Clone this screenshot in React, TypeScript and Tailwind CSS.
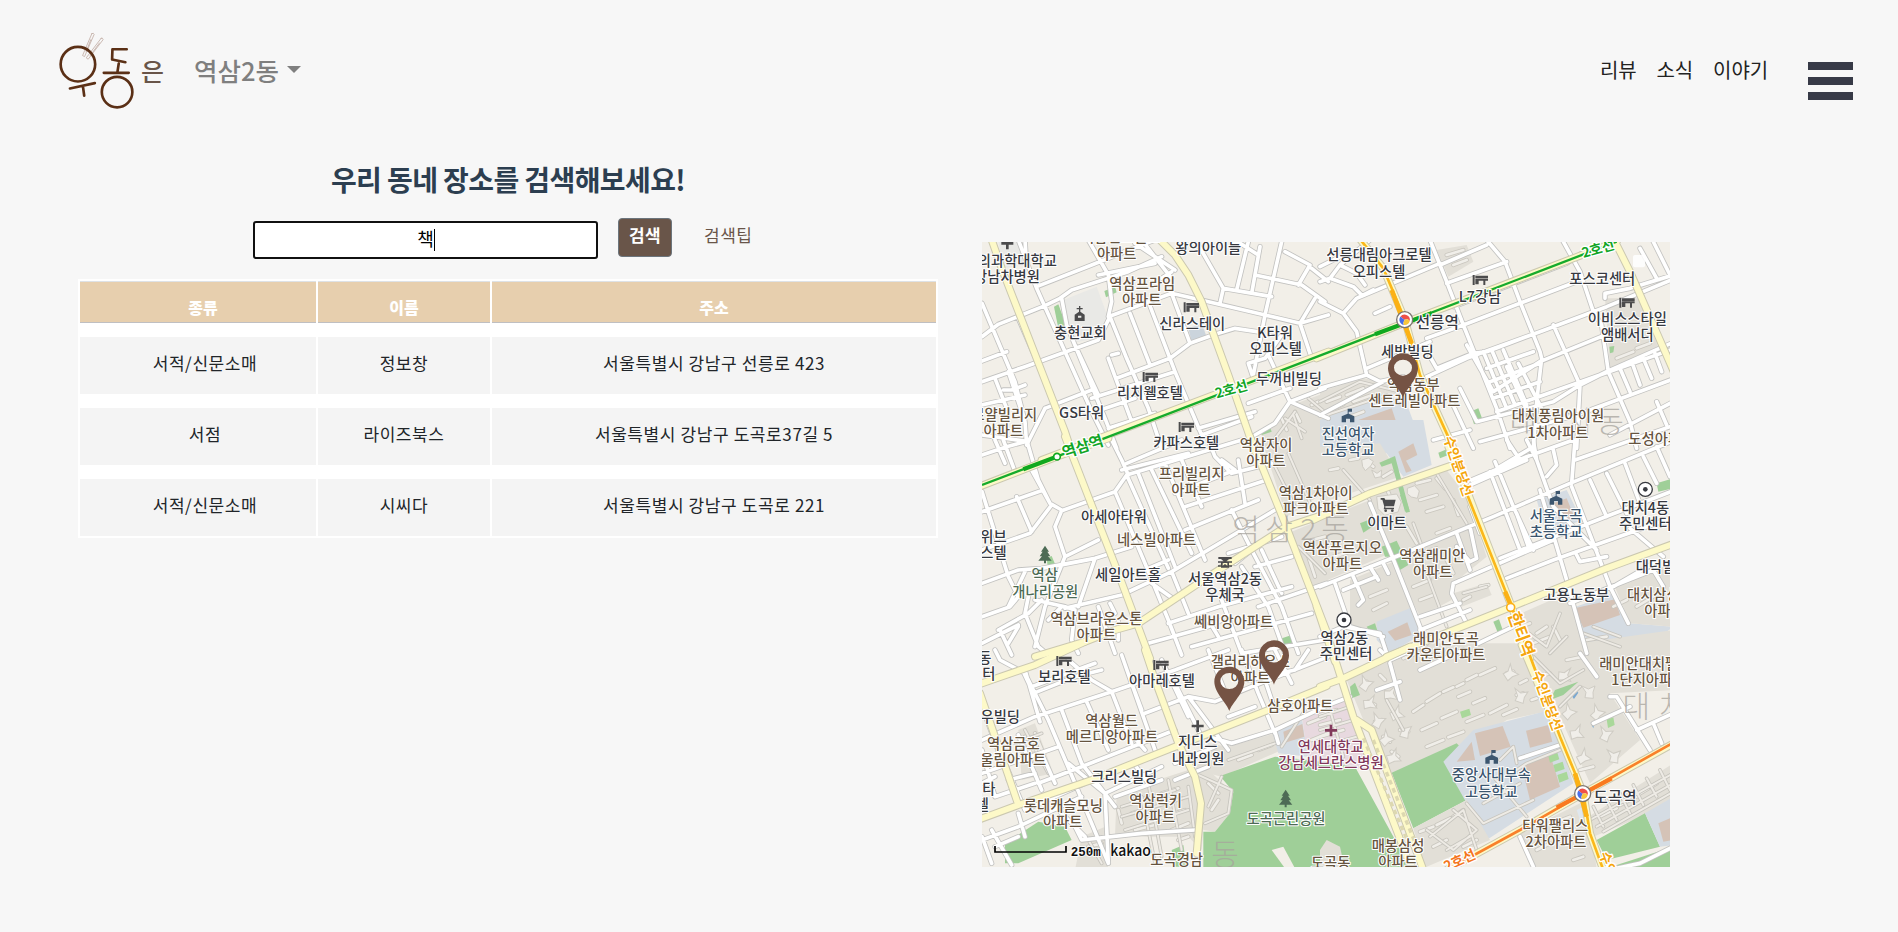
import React from "react";

type Tile = "a" | "b" | "c" | "d" | "e" | "f";

const origin: Record<Tile, [number, number]> = {
  a: [0, 0],
  b: [1035, 0],
  c: [0, 615],
  d: [1035, 615],
  e: [0, 1245],
  f: [1035, 1245],
};
const tiles: Tile[] = ["a", "b", "c", "d", "e", "f"];
const shift = (t: Tile) => `translate(${origin[t][0]} ${origin[t][1]})`;

const streets: Record<Tile, string> = {
  a: `M21 205L120 440 150 560 155 630M130 15L185 160 205 205 355 540 400 630M21 305L70 268 210 212 255 190 290 165 460 110 560 65
M150 15L155 95M185 155L350 90 500 30 540 15M21 378L95 350M21 440L150 395 370 315 405 245M260 190L275 270 390 550 425 640M340 15L400 120 410 200 400 245
M370 120L540 85M400 245L590 175 700 200 870 240 975 265 1060 240M405 245L455 370 520 520 560 640M465 235L525 390M520 200L600 410 680 600M590 175L645 325
M425 430L585 370 645 325 720 298 780 280 860 292M350 490L600 410M210 520L350 465M360 530L480 490M155 630L210 520M300 330L370 480M60 430L95 520M100 410L140 530
M85 465L110 465 150 450M430 355L410 360M400 580L540 535M480 25L600 105M500 15L590 130M590 110L560 130M670 30L745 160 735 205M745 160L890 185M820 20L785 165M855 35L830 175M920 20L870 240 835 420
M780 15L850 60M840 120L980 150 1050 200M1005 90L970 150M1005 90L930 50M1020 190L975 265 1010 370M1060 140L1010 100M920 300L870 370 820 385 835 430M880 360L945 500M820 505L945 460M945 500L1060 550
M945 500L900 565 840 600M670 580L840 530M945 500L1050 460M680 600L830 545M21 510L150 480M130 250L230 480M400 370L470 560M21 600L160 620`,
  b: `M330 15L360 90 380 140 430 270 530 520 570 640M500 15L555 80 600 200 660 350 665 370 650 500 640 640M730 20L780 110 820 230 845 270 865 410 930 560 950 640
M0 200L70 235 110 290 140 420M70 235L110 190 360 85M110 190L160 165M30 130L60 90 150 15M0 140L30 130 100 155 125 180M60 90L110 115 135 150M360 90L500 30M380 145L560 80M400 215L740 85 800 45
M165 235L210 215M430 270L600 205 770 140M310 430L440 370 660 290 860 215 1065 130M140 420L180 440 250 425M140 400L330 320M350 400L460 355 500 350 660 290M330 365L350 400M490 350L560 520M515 345L585 510M550 345L620 510
M440 330L520 470 660 380 880 290M500 400L640 350M510 440L660 385M520 490L660 440M530 530L1065 340M700 270L780 450M860 410L1065 320M780 450L860 410M780 450L770 640M420 460L470 560 700 500 780 450M900 400L930 470M935 380L960 450M970 370L995 430M1005 355L1025 410
M480 620L770 540 1065 430M390 490L460 640M430 270L320 310M960 40L1010 130M1000 20L1050 120M1060 120L930 160 855 175 855 190M870 600L1060 500M1010 500L1040 570M0 460L140 420M0 540L190 440M595 385L665 520M560 395L620 525M0 95L90 50`,
  c: `M21 155L60 280 100 410 130 470 105 500 21 530M60 0L90 70M85 0L120 95M21 45L95 20 150 5M21 215L205 150M125 170L170 275M170 90L225 190 260 210M230 195L165 280 21 330M260 212L240 260 270 350 210 500 180 620
M155 0L190 120 225 190M260 212L420 155 455 105 800 0M420 155L510 370M455 105L580 385M490 100L600 380M530 90L650 340M570 70L690 360M455 70L620 0M460 105L440 60 410 0M620 60L680 200M440 90L640 40M600 160L780 90M630 200L875 120
M270 350L370 300M260 375L360 355 470 320M360 355L310 500M270 505L440 465 590 395 800 270 900 210M770 210L830 330M630 270L850 180M21 430L130 390 200 385 360 355M150 395L100 500M180 480L270 500 300 510 290 600 310 640M160 470L150 520 190 620 220 645
M21 610L100 570 130 555M75 570L110 645M100 610L130 560M200 480L160 520 70 570M220 540L260 500M530 430L600 480M510 370L580 540 620 645M510 390L580 360M590 395L640 520M580 550L730 500 950 440M520 610L700 560 740 540M740 480L800 640M700 540L730 590
M800 380L880 500 930 640M830 330L920 500 970 640M860 330L920 460M850 500L1055 430M650 620L1010 520M800 640L1050 600M840 380L950 350M780 370L830 330M700 0L720 50 770 100 890 70M740 60L780 90M790 60L810 190M405 490L420 520M430 545L430 600M370 500L420 640M920 290L760 340`,
  d: `M0 440L240 345 520 230 750 130 1065 0M150 190L215 345 300 560 310 640M455 120L620 50 760 0M640 0L650 60 700 200 830 330M525 65L580 200 640 330M510 95L600 330M450 135L620 60M540 355L870 225 1065 150M560 415L700 360 1065 230
M400 430L700 300M660 150L740 420 800 640M755 140L870 440 925 550M765 0L755 130M700 30L710 75 680 110M765 60L1050 -40M810 120L860 230M860 100L920 220M915 70L960 190M970 50L1010 130M1010 20L1050 110M400 430L395 460 440 550M410 280L450 390M450 260L470 355 450 365 410 320
M300 530L420 490M300 570L450 510M45 430L90 560 190 590M100 410L130 480 115 495M150 380L175 420M190 370L205 400M70 450L170 410M770 345L780 365 860 350M930 265L1030 350M1000 370L880 440M750 490L900 430 1000 390 1030 440M340 0L450 -30M0 590L70 560 180 580 200 640M450 200L480 280
M590 220L625 320M640 20L540 80M475 610L600 550M620 0L650 60M560 0L600 60`,
  e: `M60 0L75 30 150 70 220 210 300 400 400 640M145 65L175 130 300 80 380 60M170 110L360 40M21 270L180 200 410 125 600 60 760 0M280 30L350 90 410 125 470 280M21 370L250 290M150 60L195 215M260 180L320 340 420 470M335 155L400 300
M410 125L470 280M440 15L540 300M470 100L500 180M190 400L320 350 600 240M60 440L180 400M280 340L390 430 400 640M21 170L80 330M60 270L150 480M100 390L180 370M130 255L200 420M240 470L330 560M390 430L560 350M480 345L520 400M510 190L640 140 720 155 830 110 1060 20
M640 140L760 300M560 30L640 200M600 100L680 260M700 0L760 150M800 0L850 130 900 250M700 260L770 280 900 240 1050 170M820 90L960 60 1000 0M600 390L700 350M420 440L560 390M21 570L130 530 320 440M50 540L110 645M130 490L150 560M60 590L130 560M300 530L320 570 500 550 660 540
M150 480L330 400M21 400L60 380M21 300L60 440M900 0L950 100M860 60L900 180M600 340L720 290M760 200L840 170M200 310L240 400M450 230L510 300M21 560L50 640M900 245L910 280`,
  f: `M180 0L210 30 320 -20M210 40L240 150M170 120L240 95M300 60L430 0M0 175L90 140M780 10L830 80M600 325L720 285M820 220L930 170M870 140L890 140 990 300M950 240L1060 190M1000 220L1025 280M600 560L640 650M850 640L890 655 960 640 1060 590`,
};

const lanes: Record<Tile, string> = {
  a: `M900 610L960 530M930 550L990 590M955 540L980 610M1000 490L1060 540`,
  b: `M0 500L120 440 240 470M20 540L200 480`,
  c: `M890 60L960 200M940 40L1010 200M970 320L1050 400`,
  d: `M70 90L150 180M350 100L440 250M280 250L310 330M320 400L380 560M430 460L500 440M790 580L900 620M820 560L900 590M600 560L680 620 720 520M690 640L740 590`,
  e: `M660 370L770 420 760 490 690 520M440 470L600 420M440 500L640 440M450 540L640 480M520 400L560 620M580 390L620 600M640 410L660 560M500 440L540 640M340 570L380 640M150 240L220 370M120 280L200 250M700 470L740 380M760 330L900 280M920 290L990 180`,
  f: `M440 460L490 520 640 450M490 460L600 400M520 380L620 500M590 360L620 340 720 300M540 330L580 290 590 340M320 540L400 600 470 540 400 480M330 560L430 480 470 600M380 600L450 560M810 510L1060 370M830 530L1060 400M850 545L1060 425M820 470L850 530M860 450L890 510M900 430L930 490M940 405L970 465M980 385L1010 440M1020 360L1050 420
M720 170L780 110M640 20L720 100 790 60M200 150L250 240M0 200L90 170M0 240L100 210M0 290L110 260M30 180L70 320`,
};

const avenues: Record<Tile, string> = {
  a: `M45 0L80 100 270 590 290 650M540 0L600 60 640 120 680 200 760 420 840 650M200 675L1060 350`,
  b: `M-10 370L250 265 890 20M110 0L190 100 255 255 300 420 405 650M875 0L930 110 1000 270 1070 430`,
  c: `M0 145L245 50 400 -5M270 -10L340 170 430 400 525 655M825 -10L930 250 1055 575M180 650L330 605 420 570 490 550 700 410 930 262 1065 218`,
  d: `M-20 240L150 160 390 78M385 20L440 150 575 500 630 655M200 650L575 500 860 385 1070 308M-10 500L45 665`,
  e: `M0 107L180 45 330 -25M510 0L540 90 610 280 660 380 678 460 665 610M0 513L130 465 350 390 600 290 880 180 1055 108M15 130L60 260 130 465`,
  f: `M0 110L70 85 270 -10M30 -20L100 200 115 240 260 620 280 660M110 210L155 240 310 660M605 -15L720 260 790 430 810 550 850 660M380 660L600 540 790 430 1070 275`,
};

interface Area { t: Tile; c: string; d: string }
const estate = "#e2dfd7";
const campus = "#d5dce3";
const court = "#d5c3b7";
const park = "#9fcf98";
const areas: Area[] = [
  { t: "a", c: "#e9e9e6", d: "M265 195L365 155 400 250 365 310 290 325Z" },
  { t: "a", c: "#e9e9e6", d: "M70 20L140 20 145 90 85 100Z" },
  { t: "a", c: park, d: "M388 168L420 155 425 172 393 187Z" },
  { t: "a", c: park, d: "M237 215L250 208 275 275 250 280Z" },
  { t: "a", c: "#cbd4dc", d: "M640 280L680 265 695 305 650 320Z" },
  { t: "a", c: estate, d: "M860 590L950 510 1060 470 1060 640 860 640Z" },
  { t: "a", c: park, d: "M855 585L885 575 890 590 860 600Z" },
  { t: "b", c: estate, d: "M0 470L130 430 190 440 240 470 200 490 0 560Z" },
  { t: "b", c: campus, d: "M0 555L200 475 265 520 310 640 0 640Z" },
  { t: "b", c: court, d: "M100 560L215 520 235 580 120 630Z" },
  { t: "b", c: park, d: "M450 530L475 520 488 555 462 568Z" },
  { t: "b", c: estate, d: "M350 45L440 30 460 80 385 125Z" },
  { t: "b", c: estate, d: "M855 190L960 190 1020 350 870 400Z" },
  { t: "b", c: park, d: "M868 335L883 333 880 352 870 355Z" },
  { t: "c", c: estate, d: "M870 30L1060 0 1060 150 935 230Z" },
  { t: "c", c: estate, d: "M950 275L1060 230 1060 430 1020 450Z" },
  { t: "c", c: park, d: "M215 355L230 348 240 372 218 378Z" },
  { t: "c", c: park, d: "M905 600L950 585 957 610 915 620Z" },
  { t: "d", c: campus, d: "M0 0L0 -60 310 -60 335 75 250 110 200 40 0 60Z" },
  { t: "d", c: estate, d: "M0 20L180 10 240 110 0 190Z" },
  { t: "d", c: estate, d: "M140 165L380 90 440 170 500 350 400 430 395 480 300 530 210 350Z" },
  { t: "d", c: estate, d: "M0 240L150 180 210 340 0 430Z" },
  { t: "d", c: court, d: "M235 35L280 10 292 45 258 62 275 92 258 98Z" },
  { t: "d", c: park, d: "M178 68L225 48 268 210 255 215 215 70 185 80Z" },
  { t: "d", c: park, d: "M355 38L380 28 385 45 360 55Z" },
  { t: "d", c: park, d: "M240 165L252 162 270 215 258 218Z" },
  { t: "d", c: park, d: "M120 250L145 240 155 262 130 278Z" },
  { t: "d", c: park, d: "M185 320L230 302 265 375 240 390 222 350 195 350Z" },
  { t: "d", c: estate, d: "M90 420L220 365 300 560 200 590 90 560Z" },
  { t: "d", c: estate, d: "M400 460L500 430 515 465 425 500Z" },
  { t: "d", c: campus, d: "M170 545L280 500 310 580 210 640 170 600Z" },
  { t: "d", c: court, d: "M203 575L262 547 275 585 225 602Z" },
  { t: "d", c: campus, d: "M650 180L740 150 785 240 680 285Z" },
  { t: "d", c: court, d: "M700 190L740 175 765 235 720 250Z" },
  { t: "d", c: park, d: "M1010 130L1060 115 1060 145 1015 155Z" },
  { t: "d", c: estate, d: "M580 530L740 460 810 640 620 660Z" },
  { t: "d", c: campus, d: "M755 505L880 460 930 550 1060 560 980 620 820 645Z" },
  { t: "d", c: court, d: "M763 505L885 478 900 525 790 563Z" },
  { t: "d", c: estate, d: "M880 430L1060 370 1060 560 930 550Z" },
  { t: "d", c: park, d: "M520 545L537 538 550 575 535 582Z" },
  { t: "d", c: park, d: "M140 560L165 550 172 572 150 575Z" },
  { t: "f", c: estate, d: "M80 90L330 -20 610 -20 700 180 560 210 410 310 215 370 130 210Z" },
  { t: "f", c: estate, d: "M630 0L1060 -60 1060 120 870 130 960 270 810 400Z" },
  { t: "e", c: estate, d: "M700 280L760 290 900 250 920 300 740 380 660 360Z" },
  { t: "e", c: campus, d: "M890 240L980 200 1000 320 910 310Z" },
  { t: "e", c: court, d: "M925 245L982 222 988 260 930 278Z" },
  { t: "e", c: "#e8d9df", d: "M980 190L1130 140 1190 360 1000 340Z" },
  { t: "e", c: estate, d: "M425 430L640 360 690 460 680 600 640 560 420 560Z" },
  { t: "e", c: estate, d: "M660 360L690 350 775 430 765 490 720 545 685 540Z" },
  { t: "e", c: park, d: "M735 378L900 320 1000 330 1140 350 1310 660 685 660 685 545 720 545 765 490 775 425Z" },
  { t: "e", c: park, d: "M90 580L190 515 270 530 290 570 130 640 90 640Z" },
  { t: "e", c: estate, d: "M320 560L390 530 400 660 300 660Z" },
  { t: "e", c: estate, d: "M130 240L180 220 235 370 140 390Z" },
  { t: "e", c: park, d: "M590 600L625 585 635 650 600 650Z" },
  { t: "e", c: "#f2efe8", d: "M890 600L925 590 960 655 930 655Z" },
  { t: "f", c: park, d: "M215 368L410 280 430 300 440 450 280 535Z" },
  { t: "f", c: campus, d: "M370 335L460 240 690 180 760 400 500 570 440 460Z" },
  { t: "f", c: court, d: "M465 250L548 228 572 290 480 318Z" },
  { t: "f", c: court, d: "M618 242L685 225 697 275 630 293Z" },
  { t: "f", c: court, d: "M605 350L690 312 720 410 630 450Z" },
  { t: "f", c: court, d: "M410 335L455 275 465 330Z" },
  { t: "f", c: estate, d: "M280 535L440 450 510 570 320 650 310 640Z" },
  { t: "f", c: "#f2efe8", d: "M400 655L600 550 720 480 800 550 840 655Z" },
  { t: "f", c: estate, d: "M600 550L800 450 830 655 650 655Z" },
  { t: "f", c: estate, d: "M805 500L1060 340 1060 460 820 560Z" },
  { t: "f", c: park, d: "M830 570L975 490 1020 590 860 630Z" },
  { t: "f", c: campus, d: "M975 490L1060 440 1060 585 1020 590Z" },
  { t: "f", c: court, d: "M1015 520L1060 500 1060 570 1030 575Z" },
  { t: "f", c: park, d: "M890 645L1060 590 1060 660 900 660Z" },
  { t: "f", c: park, d: "M690 150L705 120 775 95 730 135Z" },
  { t: "f", c: park, d: "M90 110L105 98 120 135 95 145Z" },
  { t: "f", c: "#a9d89a", d: "M420 185L448 176 453 195 426 205ZM685 318L712 308 718 328 690 338ZM700 345L728 335 734 357 706 367ZM712 375L740 365 746 387 718 398ZM860 208L880 202 884 225 864 234Z" },
  { t: "f", c: "#dfe7ee", d: "M770 480L790 470 800 500 780 510Z" },
  { t: "f", c: "#7ba8d0", d: "M757 140L770 122 775 128 762 147ZM812 218L823 217 820 235Z" },
  { t: "f", c: estate, d: "M0 600L20 570 60 590 75 660 0 660Z" },
];

const blocks: Record<Tile, string> = {
  a: `M920 550L935 585M960 530L975 560M1010 510L1030 500`,
  b: `M20 500L60 485M80 480L130 460M30 525L70 508M100 500L150 482M90 545L130 530M380 60L430 45M400 90L440 75M890 370L940 350M950 340L990 325`,
  c: `M1000 350L1020 410M1010 300L1050 290`,
  d: `M80 30L110 22M90 60L115 55M30 90L55 85M140 65L160 80M190 110L215 95M200 145L215 180M290 130L330 120M350 115L375 145M300 180L350 165M320 215L370 200M400 180L415 225M350 280L390 265M260 260L290 310M300 340L350 325M380 360L400 400M280 440L330 420M350 410L380 395M300 480L340 465M150 470L200 450M160 510L200 490M430 480L450 470M480 440L505 435M600 560L630 550M650 580L680 560M640 610L690 590M700 560L720 600M40 350L90 335M880 500L920 480M950 500L1000 470M800 600L860 590`,
  e: `M430 480L440 520M470 460L520 440M470 490L520 475M560 430L610 415M570 460L620 445M570 500L630 480M480 540L540 525M590 540L640 520M610 570L640 560M700 400L730 430M710 480L730 450M150 260L170 320M180 250L205 310M790 330L830 315M850 300L890 285M340 590L380 580M1000 220L1050 200M1010 270L1060 250`,
  f: `M280 185L310 165M320 155L360 130M370 125L400 112M410 110L430 100M440 90L470 75M480 75L525 55M305 240L350 220M365 205L410 185M415 140L450 125M460 160L495 145M320 290L370 270M385 262L430 245M440 215L490 195M510 190L560 165M550 195L590 178M140 95L130 110M180 75L195 90M145 155L165 165M165 215L185 210M240 240L265 245M220 185L240 195M190 260L210 275M215 305L235 320M330 20L370 0M250 25L290 10M560 70L580 65M590 135L610 130M635 150L650 145M600 100L620 90M0 195L50 180M0 225L60 210M0 260L70 240M300 545L340 530M350 525L390 505M340 590L380 570M400 500L430 480M430 590L470 570M650 600L690 580M700 520L750 500M760 630L790 620M840 500L890 475M900 465L950 440M960 430L1010 400M650 80L690 70M740 30L790 20M780 360L820 350`,
};

const towers: [number, number][] = [
  [805, 125], [830, 188], [770, 248], [855, 252], [790, 320], [880, 318], [745, 185], [150, 158], [172, 212], [230, 190], [252, 243], [198, 265],
  [212, 130], [135, 100], [220, 320], [600, 137], [570, 68], [735, 75],
];

const BROWN = "#66543f";
const DARK = "#37393f";
const NAVY = "#3c566f";
const WINE = "#823a5b";
const FOREST = "#4d6b55";

type Label = [Tile, number, number, string, string?];
const labels: Label[] = [
  ["a", 127, 92, "의과학대학교"], ["a", 96, 141, "강남차병원"], ["a", 437, 22, "역삼센트럴즈", BROWN], ["a", 425, 72, "아파트", BROWN],
  ["a", 700, 54, "왕의아이들"], ["a", 502, 163, "역삼프라임", BROWN], ["a", 500, 210, "아파트", BROWN], ["a", 316, 309, "충현교회"],
  ["a", 652, 282, "신라스테이"], ["a", 900, 309, "K타워"], ["a", 902, 357, "오피스텔"], ["a", 942, 448, "두꺼비빌딩"], ["a", 525, 490, "리치웰호텔"],
  ["a", 320, 550, "GS타워"], ["a", 88, 555, "로얄빌리지", BROWN], ["a", 85, 603, "아파트", BROWN],
  ["b", 177, 76, "선릉대림아크로텔"], ["b", 177, 125, "오피스텔"], ["b", 480, 200, "L7강남"], ["b", 847, 146, "포스코센터"], ["b", 922, 267, "이비스스타일"],
  ["b", 922, 316, "앰배서더"], ["b", 262, 366, "세방빌딩"], ["b", 280, 466, "역삼동부", BROWN], ["b", 283, 514, "센트레빌아파트", BROWN],
  ["b", 84, 612, "진선여자", NAVY], ["b", 84, 660, "고등학교", NAVY], ["b", 714, 559, "대치풍림아이원", BROWN], ["b", 714, 608, "1차아파트", BROWN], ["b", 1024, 627, "도성아파트", BROWN],
  ["c", 634, 23, "카파스호텔"], ["c", 873, 31, "역삼자이", BROWN], ["c", 873, 79, "아파트", BROWN], ["c", 650, 117, "프리빌리지", BROWN], ["c", 648, 165, "아파트", BROWN],
  ["c", 417, 245, "아세아타워"], ["c", 545, 315, "네스빌아파트", BROWN], ["c", 16, 305, "두산위브"], ["c", 16, 353, "오피스텔"], ["c", 209, 421, "역삼", FOREST], ["c", 211, 470, "개나리공원", FOREST],
  ["c", 459, 419, "세일아트홀"], ["c", 750, 432, "서울역삼2동"], ["c", 750, 481, "우체국"], ["c", 364, 551, "역삼브라운스톤", BROWN], ["c", 364, 600, "아파트", BROWN], ["c", 776, 562, "쎄비앙아파트", BROWN],
  ["c", 1022, 175, "역삼1차아이", BROWN], ["c", 1022, 223, "파크아파트", BROWN], ["c", 1102, 339, "역삼푸르지오", BROWN], ["c", 1102, 387, "아파트", BROWN],
  ["d", 201, 263, "이마트"], ["d", 337, 362, "역삼래미안", BROWN], ["d", 338, 410, "아파트", BROWN], ["d", 708, 243, "서울도곡", NAVY], ["d", 708, 292, "초등학교", NAVY], ["d", 976, 219, "대치4동"],
  ["d", 976, 267, "주민센터"], ["d", 1026, 395, "대덕빌딩"], ["d", 769, 480, "고용노동부"], ["d", 1000, 480, "대치삼성", BROWN], ["d", 1032, 527, "아파트", BROWN],
  ["d", 73, 608, "역삼2동"], ["d", 78, 658, "주민센터"], ["d", 378, 613, "래미안도곡", BROWN], ["d", 378, 660, "카운티아파트", BROWN],
  ["e", -22, 38, "역삼1동"], ["e", -18, 88, "주민센터"], ["e", 268, 96, "보리호텔"], ["e", 561, 109, "아마레호텔"], ["e", 826, 52, "갤러리하우스", BROWN], ["e", 826, 100, "아파트", BROWN], ["e", 976, 184, "삼호아파트", BROWN],
  ["e", 56, 217, "대우빌딩"], ["e", 115, 298, "역삼금호", BROWN], ["e", 95, 346, "어울림아파트", BROWN], ["e", 410, 227, "역삼월드", BROWN], ["e", 411, 276, "메르디앙아파트", BROWN], ["e", 668, 292, "지디스"], ["e", 669, 341, "내과의원"],
  ["e", 448, 397, "크리스빌딩"], ["e", 2, 431, "강남타"], ["e", 2, 480, "호텔"], ["e", 265, 483, "롯데캐슬모닝", BROWN], ["e", 263, 531, "아파트", BROWN], ["e", 542, 468, "역삼럭키", BROWN], ["e", 541, 517, "아파트", BROWN],
  ["e", 933, 522, "도곡근린공원", FOREST], ["e", 605, 645, "도곡경남", BROWN], ["e", 1067, 653, "도곡동", BROWN], ["e", 1067, 306, "연세대학교", WINE], ["e", 1068, 355, "강남세브란스병원", WINE],
  ["f", 514, 391, "중앙사대부속", NAVY], ["f", 514, 440, "고등학교", NAVY], ["f", 706, 543, "타워팰리스", BROWN], ["f", 708, 591, "2차아파트", BROWN], ["f", 234, 602, "매봉삼성", BROWN], ["f", 234, 650, "아파트", BROWN],
  ["f", 976, 57, "래미안대치팰리", BROWN], ["f", 985, 104, "1단지아파트", BROWN],
];

type Sign = [Tile, number, number, "hotel" | "church" | "school" | "tree" | "plus" | "cart" | "post" | "office", string?];
const signs: Sign[] = [
  ["a", 97, 25, "plus"], ["a", 314, 236, "church"], ["a", 649, 217, "hotel"], ["a", 526, 426, "hotel"], ["a", 634, 576, "hotel"], ["b", 481, 135, "hotel"], ["b", 921, 203, "hotel"],
  ["b", 84, 543, "school", NAVY], ["c", 210, 343, "tree", FOREST], ["c", 750, 367, "post"], ["d", 205, 192, "cart"], ["d", 708, 175, "school", NAVY], ["d", 976, 148, "office"], ["d", 72, 540, "office"],
  ["e", 267, 33, "hotel"], ["e", 558, 45, "hotel"], ["e", 668, 228, "plus"], ["e", 932, 445, "tree", FOREST], ["f", 33, 241, "plus", WINE], ["f", 515, 322, "school", NAVY],
];

function SignShape({ kind, color }: { kind: Sign[3]; color: string }) {
  switch (kind) {
    case "hotel":
      return <path fill={color} d="M-23-15h6v30h-6zM-15-13h38v8h-38zM-15-4h38v6h-8v13h-6v-13h-14v11h-10z" />;
    case "church":
      return <path fill={color} fillRule="evenodd" d="M-2-23h4v6h7v4H2v7L15 3v19h-30V3L-2-6v-7h-7v-4h7zM-5 6v6H5V6z" />;
    case "school":
      return <path fill={color} d="M-1-22h13v9H2v6L19 1v18H6V8H-6v11h-13V1L-1-7z" />;
    case "tree":
      return <path fill={color} d="M0-26L12-8H7L16 6H9L20 19H3v8h-6v-8h-17L-9 6h-7L-7-8h-5z" />;
    case "plus":
      return <path fill={color} d="M-4-17h8v13h14v8H4v14h-8V4h-14v-8h14z" />;
    case "cart":
      return (
        <g fill={color}>
          <path d="M-23-18h11l3 5h31l-5 20H-9v4h26v5h-31l2-8-6-21h-5z" />
          <circle cx="-8" cy="20" r="4" /><circle cx="12" cy="20" r="4" />
        </g>
      );
    case "post":
      return <path fill={color} d="M-20-16h40v6h-8L4-3h17v4H12v8h9v4H12v3h-24v-3h-9v-4h9v-8h-9v-4H-4L-12-10h-8zM-7 2v8L0 5 7 10V2z" fillRule="evenodd" />;
    default:
      return (
        <g>
          <circle r="21" fill="#fff" stroke={DARK} strokeWidth="4" /><circle r="7" fill={DARK} />
        </g>
      );
  }
}

function Station({ x, y }: { x: number; y: number }) {
  return (
    <g transform={`translate(${x} ${y})`}>
      <circle r="24" fill="#fff" stroke="#7b7570" strokeWidth="4" />
      <path d="M-13-9A16 16 0 0 1 15 5C10-4 5 0 0 0-6-2-8-8-13-9Z" fill="#ef5148" />
      <path d="M-13-9A16 16 0 0 0-2 16C-6 8-1 4 0 0-6-2-8-8-13-9Z" fill="#4a6ee8" />
      <path d="M15 5A16 16 0 0 1-2 16C-6 8-1 4 0 0 5 0 10-4 15 5Z" fill="#f8c63c" />
    </g>
  );
}

function Pin({ x, y }: { x: number; y: number }) {
  return (
    <path
      transform={`translate(${x} ${y})`}
      fill="#755344"
      fillRule="evenodd"
      d="M0 0C-6-22-45-55-45-88A45 45 0 0 1 45-88C45-55 6-22 0 0ZM0-114A27 24 0 1 0 0-66 27 24 0 0 0 0-114Z"
    />
  );
}

function LineLabel({ x, y, angle, color, text, size = 41 }: { x: number; y: number; angle: number; color: string; text: string; size?: number }) {
  return (
    <text
      transform={`translate(${x} ${y}) rotate(${angle})`}
      textAnchor="middle" fontSize={size} fontWeight="700" fill={color}
      stroke="#fff" strokeWidth="8" strokeLinejoin="round" paintOrder="stroke"
    >
      {text}
    </text>
  );
}

function Network({ paths, width, color }: { paths: Record<Tile, string>; width: number; color: string }) {
  return (
    <g fill="none" stroke={color} strokeWidth={width} strokeLinejoin="round" strokeLinecap="round">
      {tiles.map((t) => <path key={t} transform={shift(t)} d={paths[t]} />)}
    </g>
  );
}

function TownMap() {
  return (
    <svg viewBox="21 21 2064 1875" className="block h-[625px] w-[688px] font-['Noto_Sans_CJK_KR',sans-serif]">
      <rect x="21" y="21" width="2064" height="1875" fill="#f2efe8" />
      {areas.map((a, i) => <path key={i} transform={shift(a.t)} d={a.d} fill={a.c} />)}
      <Network paths={blocks} width={13} color="#c9c6be" />
      <Network paths={blocks} width={8} color="#f0eee9" />
      <g transform={shift("f")}>
        {towers.map(([x, y], i) => (
          <path key={i} transform={`translate(${x} ${y}) rotate(${(i * 37) % 90})`} d="M-20-17L0-8 20-17 14 2 15 20-10 18-7 2Z" fill="#f0eee9" stroke="#cfccc4" strokeWidth="3" />
        ))}
      </g>
      <g transform={shift("d")} fill="#f0eee9" stroke="#cfccc4" strokeWidth="3">
        <path d="M125 60l20-6 15 10-8 14-16 14-8-12zM262 145l22-8 14 16-6 22-18-4-12-10zM155 90l16 10 14-10-2 20-18 4zM170 170l60-8 14 24-10 30-40 10-20-20z" />
      </g>
      <Network paths={lanes} width={11} color="#c6c4bd" />
      <Network paths={lanes} width={6} color="#eeebe5" />
      <Network paths={streets} width={16} color="#c2c2c0" />
      <Network paths={streets} width={11} color="#ffffff" />
      <Network paths={avenues} width={24} color="#cbc8b0" />
      <Network paths={avenues} width={18} color="#fdf9c8" />

      <g transform={shift("f")} fill="none" stroke="#ddd8b0" strokeWidth="10" strokeDasharray="14 12">
        <path d="M130 265L270 590M160 270L290 590" />
      </g>

      <g fill="none" strokeLinejoin="round">
        <path d="M21 750L245 665 1060 352 1285 265 1925 20" stroke="#16ab2c" strokeWidth="7" />
        <path d="M145 703L245 665M1200 298L1370 235" stroke="#10a81f" strokeWidth="13" />
        <path d="M1145 0L1225 100 1290 255 1335 420 1440 650 1475 775 1610 1115 1755 1505 1825 1675 1845 1795 1885 1905" stroke="#fbb81a" strokeWidth="8" />
        <path d="M1250 165L1310 325M1590 1070L1608 1112M1800 1615L1835 1745" stroke="#fbb116" strokeWidth="14" />
        <path d="M1415 1905L1635 1785 1825 1675 2100 1520" stroke="#f9812a" strokeWidth="8" />
        <path d="M1745 1718L1910 1630" stroke="#f97a20" strokeWidth="13" />
      </g>
      <circle cx="246" cy="665" r="10" fill="#fff" stroke="#10a81f" strokeWidth="5" />
      <circle cx="1607" cy="1117" r="12" fill="#fff" stroke="#fbb116" strokeWidth="5" />
      <Station x={1289} y={254} />
      <Station x={1823} y={1676} />

      <g fill="#a7a39d" fillOpacity=".75" fontWeight="300" fontSize="90" textAnchor="middle">
        <text x="813" y="914">역</text><text x="912" y="914">삼</text><text x="1000" y="914">2</text><text x="1080" y="914">동</text>
        <text x="1645" y="590">대</text><text x="1810" y="590">치</text><text x="1905" y="590">동</text>
        <text x="1984" y="1447">대</text><text x="2092" y="1447">치</text>
        <text x="750" y="1889">동</text>
      </g>

      <g fontSize="43" fontWeight="500" textAnchor="middle" stroke="#fff" strokeWidth="6" strokeLinejoin="round" paintOrder="stroke">
        {labels.map(([t, x, y, text, color], i) => (
          <text key={i} x={origin[t][0] + x} y={origin[t][1] + y} fill={color ?? DARK}>{text}</text>
        ))}
        <text x="1387" y="280" fontSize="47" fill={DARK}>선릉역</text>
        <text x="1920" y="1703" fontSize="47" fill={DARK}>도곡역</text>
      </g>

      {signs.map(([t, x, y, kind, color], i) => (
        <g key={i} transform={`translate(${origin[t][0] + x} ${origin[t][1] + y})`}>
          <SignShape kind={kind} color={color ?? "#4b4b4c"} />
        </g>
      ))}

      <LineLabel x={773} y={477} angle={-16} color="#12a526" text="2호선" />
      <LineLabel x={1873} y={55} angle={-16} color="#12a526" text="2호선" />
      <LineLabel x={328} y={650} angle={-18} color="#12a526" text="역삼역" size={46} />
      <LineLabel x={1436} y={698} angle={71} color="#f5a60c" text="수인분당선" />
      <LineLabel x={1622} y={1203} angle={70} color="#f5a60c" text="한티역" size={50} />
      <LineLabel x={1703} y={1402} angle={70} color="#f5a60c" text="수인분당선" />
      <LineLabel x={1905} y={1945} angle={70} color="#f5a60c" text="수인분당선" />
      <LineLabel x={1460} y={1889} angle={-24} color="#f4761d" text="2호선" />

      <Pin x={1284} y={488} />
      <Pin x={763} y={1428} />
      <Pin x={897} y={1349} />

      <rect x="1974" y="60" width="36" height="37" rx="6" fill="#fff" fillOpacity=".85" />
      <path d="M60 1833V1851H273V1833" fill="none" stroke="#000" strokeWidth="5" />
      <g stroke="#fff" strokeWidth="5" paintOrder="stroke" fill="#111">
        <text x="287" y="1863" fontSize="36" fontWeight="700" textLength="90" lengthAdjust="spacingAndGlyphs" className="font-['Liberation_Mono',monospace]">250m</text>
        <text x="406" y="1863" fontSize="46" fontWeight="500" textLength="122" lengthAdjust="spacingAndGlyphs">kakao</text>
      </g>
    </svg>
  );
}

function Logo() {
  return (
    <svg viewBox="0 0 230 250" className="h-[83px] w-[77px]" fill="none" stroke="#5b3016" strokeWidth="8" strokeLinecap="round" strokeLinejoin="round">
      <g stroke="#c3aea6" strokeWidth="2.5">
        <path d="M101 14L73 80 79 83 108 16Q106 10 101 14ZM129 28L84 87 90 91 135 32Q134 25 129 28ZM98 32L84 68M124 42L96 80" />
      </g>
      <circle cx="59" cy="106" r="52" />
      <path d="M35 179L110 163M74 172L78 201M206 61H163L162 92 202 100M182 104L178 130M137 132H212" />
      <circle cx="177" cy="190" r="46" />
    </svg>
  );
}

const places = [
  ["서적/신문소매", "정보창", "서울특별시 강남구 선릉로 423"],
  ["서점", "라이즈북스", "서울특별시 강남구 도곡로37길 5"],
  ["서적/신문소매", "시씨다", "서울특별시 강남구 도곡로 221"],
];

export default function App() {
  return (
    <div className="h-[932px] w-[1898px] overflow-hidden bg-[#f7f7f7] font-['Noto_Sans_CJK_KR',sans-serif] text-[17px] text-[#212529]">
      <header className="flex h-[150px] items-start pr-[45px] pl-[58px]">
        <div className="mt-[29px]"><Logo /></div>
        <span className="mt-[52px] ml-[6px] text-[25px] leading-[36px] font-medium text-[#695549]">은</span>
        <button className="mt-[52px] ml-[30px] flex items-center gap-[8px] text-[#7f7f7f]">
          <span className="text-[25.5px] leading-[36px] font-medium">역삼2동</span>
          <span className="mb-[2px] border-x-[7px] border-t-[7px] border-x-transparent border-t-[#7f7f7f]" />
        </button>
        <nav className="mt-[55px] ml-auto flex gap-[20px] text-[20px] leading-[30px] tracking-[-0.1px] text-[#222]">
          <a>리뷰</a><a>소식</a><a>이야기</a>
        </nav>
        <button aria-label="메뉴" className="mt-[62px] ml-[40px] flex w-[45px] flex-col gap-[7px]">
          <span className="h-[8px] bg-[#373a47]" /><span className="h-[8px] bg-[#373a47]" /><span className="h-[8px] bg-[#373a47]" />
        </button>
      </header>

      <main className="flex pl-[78px]">
        <section className="w-[860px]">
          <h1 className="mt-[8px] text-center text-[28px] leading-[42px] font-bold tracking-[-0.6px] text-[#2c3e50]">우리 동네 장소를 검색해보세요!</h1>
          <div className="mt-[18px] flex h-[61px] items-start pl-[175px]">
            <div className="mt-[3px] flex h-[38px] w-[345px] shrink-0 justify-center rounded-[3px] border-2 border-[#101010] bg-white text-[18px] leading-[30px] text-black">
              책<span className="mt-[6px] -mr-px h-[22px] w-px bg-black" />
            </div>
            <button className="ml-[20px] h-[39px] w-[54px] shrink-0 rounded-[4px] border border-[#6c757d] bg-[#695549] pb-[5px] text-[17px] leading-[30px] font-bold tracking-[0.3px] text-white">검색</button>
            <span className="ml-[32px] text-[17px] leading-[34px] tracking-[0.5px] text-[#695549]">검색팁</span>
          </div>
          <div className="grid grid-cols-[236px_172px_444px] gap-x-[2px] gap-y-[14px] bg-white p-[2px] text-center">
            {["종류", "이름", "주소"].map((h, c) => (
              <div key={h} className={`h-[42px] border-t border-b border-t-[#dee2e6] border-b-[#bfbfc2] bg-[#e7cfae] pt-[13px] text-[16px] leading-[24px] font-black text-white ${c === 0 ? "pl-[10px]" : ""}`}>{h}</div>
            ))}
            {places.flatMap((row, r) =>
              row.map((cell, c) => (
                <div key={`${r}-${c}`} className={`h-[57px] bg-[#f4f4f4] pt-[13px] text-[17px] leading-[26px] tracking-[0.6px] ${c === 0 ? "pl-[14px]" : ""}`}>{cell}</div>
              ))
            )}
          </div>
        </section>
        <section className="mt-[92px] ml-[44px]"><TownMap /></section>
      </main>
    </div>
  );
}
